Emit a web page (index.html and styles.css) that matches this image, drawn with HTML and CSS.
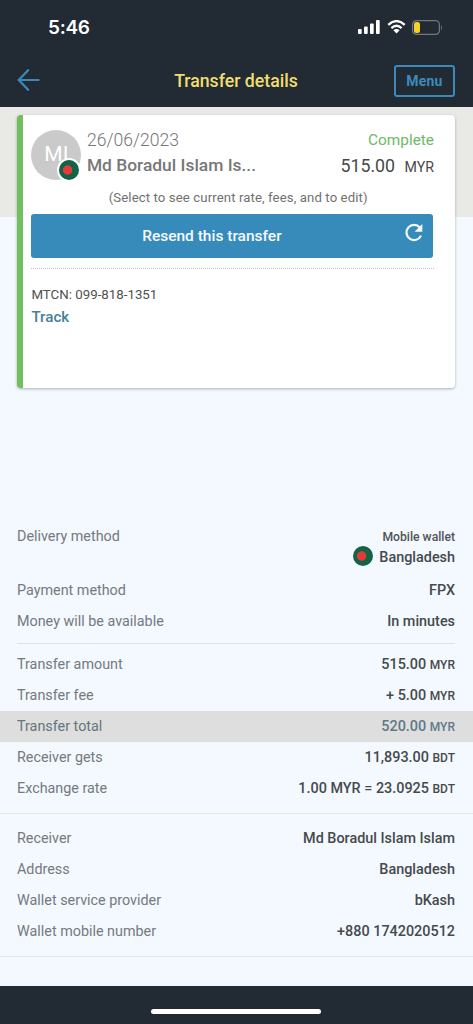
FILE: index.html
```html
<!DOCTYPE html>
<html lang="en">
<head>
<meta charset="utf-8">
<title>Transfer details</title>
<link rel="stylesheet" href="styles.css">
</head>
<body>
<div class="app">
  <div class="status">
    <span class="time">5:46</span>
    <div class="status-icons">
      <svg width="22" height="14" viewBox="0 0 22 14" fill="#fff"><rect x="0" y="9" width="3.700" height="5" rx="1"/><rect x="6" y="6.500" width="3.700" height="7.500" rx="1"/><rect x="12" y="3.500" width="3.700" height="10.500" rx="1"/><rect x="18" y="0" width="3.700" height="14" rx="1"/></svg>
      <svg class="wifi" width="19" height="14" viewBox="0 0 18 14" fill="none" stroke="#fff" stroke-width="2.300"><path d="M.8 4.900Q9-2.700 17.200 4.900M3.900 8.100Q9 3.400 14.100 8.100"/><path d="M5.900 10.300Q9 7.500 12.100 10.300L9 13.600Z" fill="#fff" stroke="none"/></svg>
      <svg class="battery" width="31" height="15" viewBox="0 0 31 15"><rect x=".6" y=".6" width="26.800" height="13.800" rx="4" fill="none" stroke="#73787d" stroke-width="1.200"/><rect x="2" y="2" width="6" height="11" rx="2.500" fill="#f7d12b"/><path d="M29 5Q31 7.500 29 10Z" fill="#73787d"/></svg>
    </div>
  </div>
  <header class="nav">
    <svg class="back" width="24" height="24" viewBox="0 0 24 24" fill="none" stroke="#3b8ab9" stroke-width="2.200"><path d="M11.800 1.500 1.800 12 11.800 22.500M2 12H22.500"/></svg>
    <h1 class="title">Transfer details</h1>
    <button class="menu">Menu</button>
  </header>
  <main class="content">
    <div class="hero">
      <section class="card">
        <div class="summary">
          <div class="avatar"><span>MI</span><i class="flag avatar-flag"></i></div>
          <div class="who"><div class="date">26/06/2023</div><div class="name">Md Boradul Islam Is...</div></div>
          <div class="result"><div class="state">Complete</div><div class="amount">515.00 <span>MYR</span></div></div>
        </div>
        <p class="hint">(Select to see current rate, fees, and to edit)</p>
        <button class="resend"><span>Resend this transfer</span>
          <svg width="20" height="20" viewBox="0 0 20 20" fill="none" stroke="#f4faff" stroke-width="2.200"><path d="M15.900 4.600A7.600 7.600 0 1 0 17 12.600"/><path d="M18.300 1V8.700H10.600Z" fill="#f4faff" stroke="none"/></svg>
        </button>
        <div class="tracking"><div class="mtcn">MTCN: 099-818-1351</div><a class="track">Track</a></div>
      </section>
    </div>
    <section class="group delivery">
      <div class="row top"><span>Delivery method</span><div class="destination"><small>Mobile wallet</small><b><i class="flag"></i>Bangladesh</b></div></div>
      <div class="row"><span>Payment method</span><b>FPX</b></div>
      <div class="row"><span>Money will be available</span><b>In minutes</b></div>
    </section>
    <section class="group costs">
      <div class="row"><span>Transfer amount</span><b>515.00 <small>MYR</small></b></div>
      <div class="row"><span>Transfer fee</span><b>+ 5.00 <small>MYR</small></b></div>
      <div class="row total"><span>Transfer total</span><b>520.00 <small>MYR</small></b></div>
      <div class="row"><span>Receiver gets</span><b>11,893.00 <small>BDT</small></b></div>
      <div class="row"><span>Exchange rate</span><b>1.00 MYR = 23.0925 <small>BDT</small></b></div>
    </section>
    <section class="group receiver">
      <div class="row"><span>Receiver</span><b>Md Boradul Islam Islam</b></div>
      <div class="row"><span>Address</span><b>Bangladesh</b></div>
      <div class="row"><span>Wallet service provider</span><b>bKash</b></div>
      <div class="row"><span>Wallet mobile number</span><b>+880 1742020512</b></div>
    </section>
  </main>
  <footer class="home"><div class="home-bar"></div></footer>
</div>
</body>
</html>
```
FILE: styles.css
```css
* { box-sizing: border-box; }
body { margin: 0; font-family: Roboto, "Liberation Sans", sans-serif; background: #f4f8ff; }
button { font: inherit; margin: 0; }
.app { width: 473px; height: 1024px; display: flex; flex-direction: column; background: #f4f8ff; overflow: hidden; }
.status { height: 54px; flex: none; background: #222a33; display: flex; justify-content: space-between; padding: 0 30px 0 48px; }
.time { color: #fff; font: 600 19px/55px Inter, sans-serif; letter-spacing: -.3px; }
.status-icons { display: flex; align-items: center; height: 54px; }
.wifi { margin-left: 7px; }
.battery { margin-left: 6px; }
.nav { height: 53px; flex: none; background: #222a33; display: grid; grid-template-columns: 61px 1fr 61px; align-items: center; padding: 0 18px 0 17px; }
.back { margin-top: -1px; }
.title { margin: 0; text-align: center; color: #f0df70; font-size: 17.700px; font-weight: 500; line-height: 24px; }
.menu { width: 61px; height: 32px; padding: 0; border: 2px solid #3b8ab9; border-radius: 3px; background: none; color: #3b8ab9; font-size: 14px; font-weight: 700; letter-spacing: .2px; }
.content { flex: 1; }
.hero { height: 409px; padding: 8px 18px 0 17px; background: linear-gradient(#e9eae6 110px, transparent 110px); }
.card { height: 273px; padding: 15px 21px 0 8.400px; background: #fff; border-left: 6px solid #72bf60; border-radius: 4px; box-shadow: 0 1px 3px rgba(0,0,0,.3); }
.summary { display: grid; grid-template-columns: 55.500px 1fr auto; height: 52px; }
.avatar { position: relative; width: 50px; height: 50px; border-radius: 50%; background: #cacaca; color: #fff; font-size: 21px; line-height: 49px; text-align: center; }
.flag { display: inline-block; width: 20px; height: 20px; border-radius: 50%; background: radial-gradient(circle at 43% 50%, #e53935 4.300px, #156347 5px); }
.avatar-flag { position: absolute; left: 28px; top: 30px; box-shadow: 0 0 0 2px #fff; }
.who { color: #777; }
.date { font-size: 17.600px; font-weight: 300; line-height: 20px; }
.name { margin-top: 4px; font-size: 17.400px; font-weight: 500; line-height: 22px; white-space: nowrap; }
.result { text-align: right; }
.state { color: #6fb867; font-size: 15.400px; line-height: 20px; }
.amount { margin-top: 5px; color: #484848; font-size: 17.800px; line-height: 22px; }
.amount span { font-size: 14.200px; margin-left: 5px; }
.hint { margin: 7px 0; padding-left: 11px; color: #717171; font-size: 13.200px; line-height: 18px; text-align: center; letter-spacing: .1px; }
.resend { position: relative; display: block; width: 402px; height: 44px; padding: 0 41px 0 0; border: 0; border-radius: 3px; background: #378bbb; color: #f4faff; font-size: 15.500px; font-weight: 500; }
.resend svg { position: absolute; right: 9px; top: 9px; }
.tracking { margin-top: 10px; padding-top: 17px; border-top: 1px dotted #bfbfbf; }
.mtcn { color: #505050; font-size: 13.300px; line-height: 18px; }
.track { display: block; margin-top: 2px; color: #487f99; font-size: 15.200px; font-weight: 500; line-height: 22px; }
.row { display: flex; align-items: center; justify-content: space-between; height: 31px; padding: 0 18px 0 17px; color: #757a7e; font-size: 14.350px; }
.row b { color: #454a4c; font-weight: 500; font-size: 14.400px; white-space: nowrap; }
.row b small { font-size: 12px; }
.row.top { height: 54px; align-items: flex-start; line-height: 32px; margin-top: 5px; }
.delivery { height: 127px; }
.delivery::after { content: ""; display: block; margin: 6px 18px 0 17px; border-top: 1px solid #dce1ea; }
.destination { display: flex; flex-direction: column; align-items: flex-end; color: #505557; }
.destination small { font-size: 12.200px; line-height: 32px; font-weight: 500; }
.destination b { display: flex; align-items: center; gap: 6px; line-height: 22px; margin-top: -6px; }
.destination .flag { margin-top: -4px; }
.costs { height: 166px; padding-top: 1px; border-bottom: 1px solid #e1e8eb; }
.row.total { background: #dedede; color: #64767c; }
.row.total b { color: #607987; }
.receiver { height: 143px; padding-top: 9px; border-bottom: 1px solid #dfe7e8; }
.home { height: 38px; flex: none; padding-top: 23px; background: #222a33; }
.home-bar { width: 170px; height: 5px; border-radius: 3px; background: #fff; margin-left: 151px; }
```
